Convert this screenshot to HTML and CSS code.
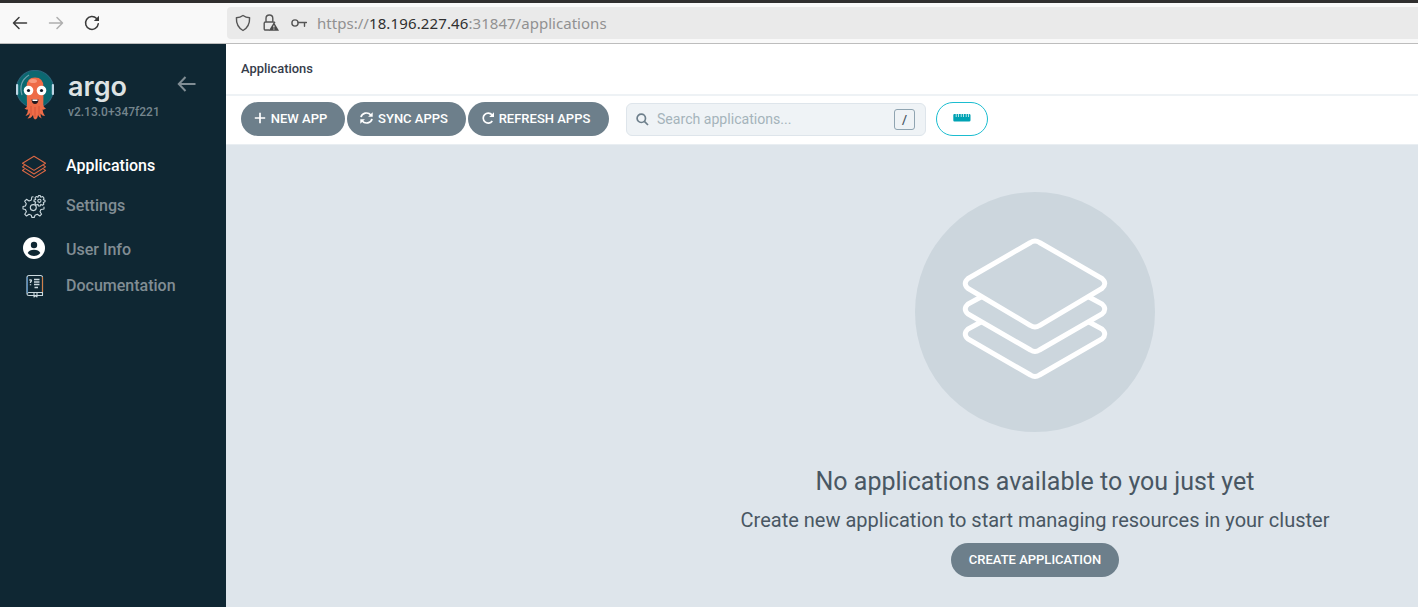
FILE: index.html
```html
<!DOCTYPE html>
<html lang="en">
<head>
<meta charset="utf-8">
<title>Applications</title>
<link rel="stylesheet" href="styles.css">
</head>
<body>
<header class="browser">
  <nav class="browser-nav">
    <svg width="16" height="14" viewBox="0 0 16 14" class="ic dark"><path d="M14.5 7H1.5M7 1.5L1.5 7L7 12.5"/></svg>
    <svg width="16" height="14" viewBox="0 0 16 14" class="ic faded"><path d="M1.5 7H14.5M9 1.5L14.5 7L9 12.5"/></svg>
    <svg width="16" height="16" viewBox="0 0 16 16" class="ic dark"><path d="M14.3 8.7A6.4 6.4 0 1 1 12.6 3.6"/><path class="solid" d="M15 .8V6H9.8z"/></svg>
  </nav>
  <div class="urlbar">
    <svg width="16" height="18" viewBox="0 0 16 18" class="ic grey"><path d="M8 1.5C6 3 3.7 3.7 1.4 3.8C1.2 9.5 3.4 14 8 16.5C12.600 14 14.8 9.500 14.600 3.800C12.300 3.700 10 3 8 1.500z"/></svg>
    <svg width="16" height="18" viewBox="0 0 16 18" class="ic grey"><path d="M6 16H2.500Q1.200 16 1.200 14.700V9.300Q1.200 8 2.500 8H10.500Q11.500 8 11.700 8.700M3 8V4.500Q3 1 6.400 1T9.800 4.500V8"/><path class="solid" d="M10.900 8.300L16 16.700H5.800z"/><path class="mark" d="M10.900 11.400v2.100M10.900 14.500v1"/></svg>
    <svg width="16" height="10" viewBox="0 0 16 10" class="ic grey"><circle cx="4" cy="5" r="3.100"/><path d="M7.200 4.500H15.500M13.500 4.500V8.200"/></svg>
    <span class="url">https://<b>18.196.227.46</b>:31847/applications</span>
  </div>
</header>
<div class="shell">
  <aside class="sidebar">
    <div class="brand">
      <svg width="40" height="52" viewBox="0 0 40 52">
        <circle cx="20" cy="19" r="18.500" fill="#0b6870" stroke="#28647b" stroke-width="1.200"/>
        <path d="M7 25Q3 12 14 5" fill="none" stroke="#6f9fab" stroke-width="1.200"/>
        <rect x="1" y="14" width="2.200" height="11" rx="1" fill="#bed5e5"/><rect x="36.800" y="14" width="2.200" height="11" rx="1" fill="#bed5e5"/>
        <path d="M11.500 17Q11.500 7.500 20 7.500T28.500 17L28.300 35Q28.500 38 31 38.500Q29 40 27.500 39.500Q28 44 30 46Q27 46 25.500 43.500Q25.500 47 27 48.500Q24 48 23 45Q22.500 49 20 49.500Q18 48 18 45Q16 48.500 12.500 48.500Q15 46 15 43Q13 46 10.500 46Q13 43 13 39.500Q11 40 9.500 38.500Q12 38 12 35z" fill="#ee6c48"/>
        <path d="M16 36V45M20 37V47M24 36V45" stroke="#cf5236" stroke-width=".8"/>
        <ellipse cx="18" cy="11" rx="4" ry="2" fill="#f99b7e"/>
        <circle cx="13.500" cy="20.500" r="4.800" fill="#fff"/><circle cx="26.500" cy="20.500" r="4.800" fill="#fff"/>
        <circle cx="13.500" cy="20.500" r="1.600" fill="#101d2b"/><circle cx="26.500" cy="20.500" r="1.600" fill="#101d2b"/>
        <path d="M16.500 29.500H23.500Q23 34 20 34T16.500 29.500z" fill="#241a20"/><path d="M17.500 29.500H22.500V31H17.500z" fill="#fff"/>
      </svg>
      <div class="brand-text"><span class="wordmark">argo</span><span class="version">v2.13.0+347f221</span></div>
      <svg class="collapse" width="20" height="16" viewBox="0 0 20 16"><path d="M18.500 8H2M8.500 1L1.800 8L8.500 15"/></svg>
    </div>
    <nav class="menu">
      <a class="item active"><svg width="26" height="24" viewBox="0 0 26 24" class="line orange"><path d="M13 1.200L24.500 8.300L13 15.400L1.500 8.300z"/><path d="M3.600 10.300L1.500 11.900L13 19L24.500 11.900L22.400 10.300"/><path d="M3.600 13.900L1.500 15.500L13 22.600L24.500 15.500L22.400 13.900"/></svg><span>Applications</span></a>
      <a class="item settings"><svg width="26" height="24" viewBox="0 0 26 24" class="line pale"><path d="M12.500 2.800L10.800 3L10.300 6L8 7L5.500 5.300L3.700 7.200L5.300 9.800L4.400 12L2 12.500V15L4.400 15.500L5.400 17.800L3.700 20.200L5.500 22L8 20.300L10.300 21.200L10.800 23.400H13.400L14 21.200L16.300 20.200L18.800 22L20.600 20.200L19 17.700L19.900 15.500L23 15V12.800"/><circle cx="12.300" cy="13.600" r="3"/><circle cx="18.400" cy="6.800" r="1.600"/><path d="M17.500 1.600H19.300L19.800 3.200L21.700 2.600L23 4L22.300 5.700L24 6.200V7.800L22.300 8.400L22.800 10.200L21.500 11.200L19.800 10.400L19.200 12H17.500L17 10.400L15.200 11L14 9.700L14.700 8L13 7.500V6L14.700 5.400L14 3.800L15.200 2.500L17 3.200z"/></svg><span>Settings</span></a>
      <a class="item user"><svg width="26" height="24" viewBox="0 0 26 24"><circle cx="13" cy="12" r="11" fill="#fff"/><circle cx="13" cy="9" r="3.200" fill="#0f2733"/><path d="M6.700 16.900Q8.400 13.800 13 13.800T19.300 16.900Q17 20 13 20T6.700 16.900z" fill="#0f2733"/></svg><span>User Info</span></a>
      <a class="item docs"><svg width="26" height="24" viewBox="0 0 26 24" class="line pale"><path d="M8 1.500H19.500Q21.500 1.500 21.500 3.500V18.500H8Q6 18.500 6 20T8 21.500H21.500V18.500M6 20V3.500Q6 1.500 8 1.500M13 18.500V23L14.500 21.700L16 23V18.500"/><path class="left" d="M6.300 3V19"/><path class="right" d="M21.500 3V18"/><path class="text" d="M8.500 6.500Q9 5.500 10 6T9.500 8V9M9.500 10.200v1M13 5.500H18.500M13 8H18.500M13 10.500H18.500M13.500 13.500H17"/></svg><span>Documentation</span></a>
    </nav>
  </aside>
  <div class="page">
    <div class="crumbs">Applications</div>
    <div class="toolbar">
      <button class="btn new"><svg width="12" height="12" viewBox="0 0 12 12"><path d="M6 .8V11.200M.8 6H11.200"/></svg>NEW APP</button>
      <button class="btn sync"><svg width="13" height="12" viewBox="0 0 13 12"><path d="M1 5.200A5.500 5 0 0 1 10.800 3M12 6.800A5.500 5 0 0 1 2.200 9"/><path class="fill" d="M12.700 .2V4.800H8.100zM.3 11.800V7.200H4.900z"/></svg>SYNC APPS</button>
      <button class="btn refresh"><svg width="12" height="12" viewBox="0 0 12 12"><path d="M10.300 9A5 5 0 1 1 10 2.800"/><path class="fill" d="M12 .2V5H7.200z"/></svg>REFRESH APPS</button>
      <div class="search"><svg width="13" height="13" viewBox="0 0 13 13"><circle cx="5.300" cy="5.300" r="4.200"/><path d="M8.400 8.400L12 12"/></svg><span>Search applications...</span><kbd>/</kbd></div>
      <button class="ruler"><svg width="18" height="8" viewBox="0 0 18 8"><path d="M1.300 0H2.800V3H3.500V0H5.300V3H6V0H7.800V3H8.500V0H10.300V3H11V0H12.800V3H13.500V0H15.300V3H16V0Q17.500 0 17.500 1.200V6.300Q17.500 7.500 16.200 7.500H1.300Q.3 7.500 .3 6.300V1.200Q.3 0 1.300 0z" fill="#00a2b3"/></svg></button>
    </div>
    <main class="empty">
      <div class="disc"><svg width="150" height="146" viewBox="0 0 150 146"><path d="M70.500 6.500Q75 3.500 79.500 6.500L142 42.500Q147.500 47.500 142 52.500L79.500 89.500Q75 92.500 70.500 89.500L8 52.500Q2.500 47.500 8 42.500z"/><path d="M21 61L8 68Q2.500 73 8 78L70.500 114Q75 117 79.500 114L142 78Q147.500 73 142 68L129 61"/><path d="M21 86L8 93Q2.500 98 8 103L70.500 139Q75 142 79.500 139L142 103Q147.500 98 142 93L129 86"/></svg></div>
      <h4>No applications available to you just yet</h4>
      <h5>Create new application to start managing resources in your cluster</h5>
      <button class="btn create">CREATE APPLICATION</button>
    </main>
  </div>
</div>
</body>
</html>
```

FILE: styles.css
```css
* { box-sizing: border-box; }
body { margin: 0; height: 607px; overflow: hidden; display: flex; flex-direction: column; font-family: Roboto, sans-serif; background: #dee5eb; }
svg { display: block; flex: none; }
button { font: inherit; border: 0; }
.browser { height: 44px; flex: none; display: flex; background: #f9f9f9; border-top: 3px solid #302f2f; border-bottom: 1px solid #bdbdbd; }
.browser-nav { width: 227px; flex: none; display: flex; align-items: center; gap: 20px; padding-left: 12px; }
.ic { fill: none; stroke-width: 1.5; stroke-linecap: round; stroke-linejoin: round; }
.ic .solid { stroke: none; }
.dark { stroke: #3c3c3c; }
.dark .solid { fill: #3c3c3c; }
.faded { stroke: #afafaf; }
.grey { stroke: #555; stroke-width: 1.4; }
.grey .solid { fill: #4b4b4b; }
.grey .mark { stroke: #eaeaea; stroke-width: 1.2; stroke-linecap: butt; }
.urlbar { flex: 1; height: 32px; margin-top: 4px; padding-left: 8px; display: flex; align-items: center; gap: 12px; background: #eaeaea; border-radius: 4px 0 0 4px; }
.url { margin-left: -2px; font: 15px/20px "Noto Sans", sans-serif; color: #919191; white-space: nowrap; letter-spacing: .03px; }
.url b { font-weight: 400; color: #303030; letter-spacing: .13px; }
.shell { flex: 1; display: flex; min-height: 0; }
.sidebar { width: 226px; flex: none; background: #0f2733; }
.brand { display: flex; padding: 26px 0 0 15px; height: 101px; }
.brand-text { display: flex; flex-direction: column; width: 108px; padding-left: 13px; }
.wordmark { font: 600 27px/33px Inter, sans-serif; color: #dee3e3; height: 35px; }
.version { font-size: 12px; line-height: 14px; font-weight: 500; color: #75858d; white-space: nowrap; }
.collapse { margin: 6px 0 0 14px; fill: none; stroke: #818d94; stroke-width: 2; }
.menu { padding-left: 21px; }
.item { display: flex; align-items: center; gap: 19px; height: 40px; font-size: 16px; font-weight: 500; color: #818d94; }
.active { color: #fff; }
.active svg { margin-top: 3px; }
.settings svg { margin-top: 2px; }
.user { height: 46px; padding-top: 2px; }
.user svg { margin-bottom: 3px; }
.docs { height: 28px; }
.docs svg { margin-top: 2px; }
.line { fill: none; stroke-width: 1.1; stroke-linejoin: round; }
.orange { stroke: #dc6844; }
.pale { stroke: #cbd9df; }
.pale .text { stroke-width: 1.4; }
.left { stroke: #528bc0; }
.right { stroke: #cf804b; }
.page { flex: 1; display: flex; flex-direction: column; min-width: 0; }
.crumbs { height: 52px; padding: 0 15px; background: #fff; border-bottom: 2px solid #eef2f5; font-size: 12.9px; font-weight: 500; line-height: 50px; color: #363c4a; }
.toolbar { height: 49px; padding: 0 15px; display: flex; align-items: center; background: #fff; border-bottom: 1px solid #e9eef2; padding-bottom: 2px; }
.btn { height: 34px; border-radius: 17px; background: #6d7f8b; color: #fff; font-size: 13px; font-weight: 500; display: flex; align-items: center; justify-content: center; gap: 5px; padding: 0 5px 2px 0; margin-right: 2px; white-space: nowrap; }
.btn svg { fill: none; stroke: #fff; stroke-width: 1.7; }
.btn .fill { fill: #fff; stroke: none; }
.new { width: 104px; }
.sync { width: 119px; }
.refresh { width: 141px; }
.search { width: 300px; height: 33px; margin-left: 15px; display: flex; align-items: center; padding: 0 10px 0 9px; gap: 8px; border: 1px solid #dee5eb; border-radius: 6px; background: #eff3f6; color: #a5b3bb; font-size: 14.1px; }
.search svg { fill: none; stroke: #6d7f8b; stroke-width: 1.7; }
.search span { flex: 1; }
kbd { width: 21px; height: 21px; border: 1px solid #8fa4b1; border-radius: 3px; font: 500 13px/19px Roboto, sans-serif; color: #495763; text-align: center; }
.ruler { width: 52px; height: 34px; margin-left: 10px; padding: 0 0 2px; display: flex; align-items: center; justify-content: center; border: 1px solid #1bbdd0; border-radius: 17px; background: #fff; }
.empty { flex: 1; padding: 47px 0 0 426px; width: 1192px; display: flex; flex-direction: column; align-items: center; color: #495763; background: #dee5eb; }
.disc { width: 240px; height: 240px; border-radius: 50%; background: #ccd6dd; display: flex; align-items: center; justify-content: center; padding-bottom: 6px; }
.disc svg { fill: none; stroke: #fff; stroke-width: 5; }
h4, h5 { margin: 0; font-weight: 400; white-space: nowrap; }
h4 { margin-top: 34px; font-size: 25px; line-height: 32px; }
h5 { margin-top: 9px; font-size: 20px; line-height: 26px; }
.create { width: 168px; margin: 10px 0 0; padding-right: 0; flex: none; }
```
